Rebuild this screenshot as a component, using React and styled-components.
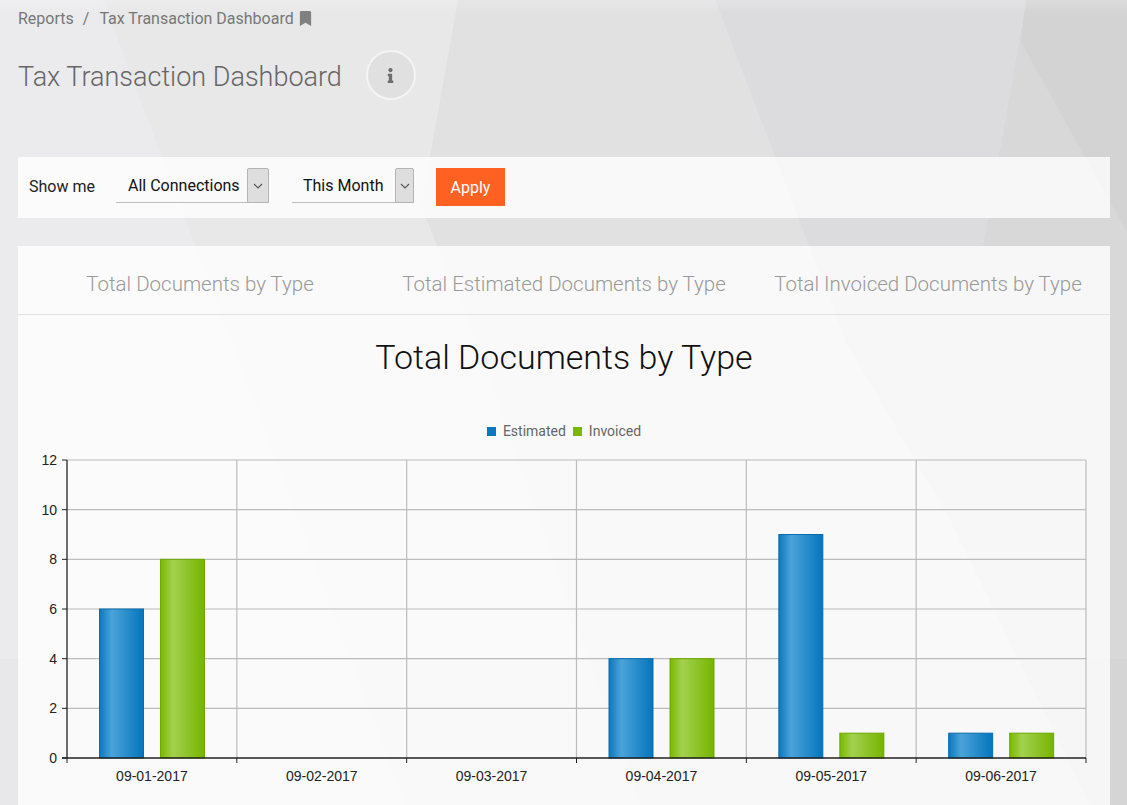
import React from 'react';
import styled, { createGlobalStyle } from 'styled-components';
import { FaBookmark, FaInfo } from 'react-icons/fa';

// STYLES

const GlobalStyle = createGlobalStyle`
  html, body {
    margin: 0;
    height: 805px;
    overflow: hidden;
    background: #ebebed;
    font-family: Roboto, "Liberation Sans", sans-serif;
  }
`;

const Backdrop = styled.svg`
  position: absolute;
  top: 0;
  left: 0;
  width: 1127px;
  height: 805px;
`;

const Page = styled.div`
  position: relative;
  padding: 0 17px 0 18px;
`;

const Breadcrumb = styled.nav`
  display: flex;
  align-items: center;
  height: 18px;
  padding-top: 9px;
  font-size: 16px;
  color: #777;
`;

const Crumb = styled.span`
  margin-right: ${(p) => p.$gap || 0}px;
`;

const TitleRow = styled.div`
  display: flex;
  align-items: center;
  height: 50px;
  margin-top: 23px;
`;

const PageTitle = styled.h1`
  margin: 4px 23px 0 0;
  font-size: 27px;
  font-weight: 300;
  color: #666;
`;

const InfoButton = styled.button`
  display: flex;
  align-items: center;
  justify-content: center;
  box-sizing: border-box;
  width: 50px;
  height: 50px;
  margin-left: 1px;
  padding: 0;
  border: 2px solid #f4f4f4;
  border-radius: 50%;
  background: #e0e0e0;
  color: #6e6e6e;
`;

const FilterBar = styled.section`
  display: flex;
  align-items: flex-start;
  box-sizing: border-box;
  height: 61px;
  margin-top: 57px;
  padding: 11px 0 0 11px;
  background: rgba(255, 255, 255, 0.78);
`;

const FilterLabel = styled.span`
  width: 87px;
  padding-top: 9px;
  font-size: 16px;
  color: #222;
`;

const Select = styled.div`
  display: flex;
  justify-content: space-between;
  box-sizing: border-box;
  width: ${(p) => p.$width}px;
  height: 35px;
  margin-right: 23px;
  border-bottom: 1px solid #bdbdbd;
`;

const SelectValue = styled.span`
  padding: 8px 0 0 ${(p) => p.$indent}px;
  font-size: 16px;
  color: #111;
`;

const SelectArrow = styled.span`
  display: flex;
  align-items: center;
  justify-content: center;
  box-sizing: border-box;
  width: ${(p) => p.$width}px;
  height: 35px;
  border: 1px solid #b4b4b4;
  border-radius: 2px;
  background: #dedede;
  color: #555;
`;

const ApplyButton = styled.button`
  width: 69px;
  height: 38px;
  margin-left: -1px;
  border: 0;
  background: #ff6123;
  color: #fff;
  font: 16px Roboto, sans-serif;
`;

const Card = styled.section`
  height: 559px;
  margin-top: 28px;
  background: rgba(255, 255, 255, 0.78);
`;

const Tabs = styled.div`
  display: grid;
  grid-template-columns: repeat(3, 1fr);
  height: 68px;
  border-bottom: 1px solid #e2e2e2;
`;

const Tab = styled.div`
  padding-top: 26px;
  text-align: center;
  font-size: 20.5px;
  font-weight: 300;
  color: #999;
`;

const ChartTitle = styled.h2`
  margin: 22px 0 0;
  height: 40px;
  line-height: 40px;
  text-align: center;
  font-size: 34px;
  font-weight: 300;
  color: #111;
`;

const Legend = styled.div`
  display: flex;
  justify-content: center;
  align-items: center;
  gap: 7px;
  height: 16px;
  margin-top: 46px;
  font-size: 14px;
  color: #666;
`;

const LegendItem = styled.span`
  display: flex;
  align-items: center;
  gap: 7px;
`;

const Swatch = styled.i`
  width: 9px;
  height: 9px;
  background: ${(p) => p.$color};
`;

const ChartSvg = styled.svg`
  display: block;
  margin-top: 6px;
  font-family: "Liberation Sans", Arial, sans-serif;
  font-size: 14px;
`;

// DATA

const days = [
  { label: '09-01-2017', estimated: 6, invoiced: 8 },
  { label: '09-02-2017', estimated: 0, invoiced: 0 },
  { label: '09-03-2017', estimated: 0, invoiced: 0 },
  { label: '09-04-2017', estimated: 4, invoiced: 4 },
  { label: '09-05-2017', estimated: 9, invoiced: 1 },
  { label: '09-06-2017', estimated: 1, invoiced: 1 },
];

const LEFT = 49;
const RIGHT = 1068;
const TOP = 15;
const BOTTOM = 313;
const STEP = (RIGHT - LEFT) / 6;
const yFor = (v) => BOTTOM - ((BOTTOM - TOP) * v) / 12;

// COMPONENTS

const Chevron = () => (
  <svg width="10" height="6" viewBox="0 0 10 6" fill="none" stroke="currentColor" strokeWidth="1.1">
    <path d="M1 1l4 4 4-4" />
  </svg>
);

const Bar = ({ x, value, fill, stroke }) => {
  if (!value) return null;
  const y = yFor(value);
  return <rect x={x} y={y} width={44} height={BOTTOM - y} fill={`url(#${fill})`} stroke={stroke} />;
};

const Chart = () => {
  const yTicks = [0, 2, 4, 6, 8, 10, 12];
  const xTicks = [0, 1, 2, 3, 4, 5, 6].map((i) => LEFT + STEP * i);
  return (
    <ChartSvg width="1092" height="360" viewBox="0 0 1092 360">
      <defs>
        <linearGradient id="blue">
          <stop offset="0" stopColor="#0a78be" />
          <stop offset="0.28" stopColor="#4ba3d8" />
          <stop offset="1" stopColor="#0475bd" />
        </linearGradient>
        <linearGradient id="green">
          <stop offset="0" stopColor="#7ab800" />
          <stop offset="0.28" stopColor="#a3d14f" />
          <stop offset="1" stopColor="#76b400" />
        </linearGradient>
      </defs>
      {yTicks.filter((v) => v).map((v) => (
        <line key={v} x1={LEFT} x2={RIGHT} y1={yFor(v)} y2={yFor(v)} stroke="#bcbcbc" strokeWidth="1.2" />
      ))}
      {xTicks.slice(1).map((x) => (
        <line key={x} x1={x} x2={x} y1={TOP} y2={BOTTOM} stroke="#bcbcbc" strokeWidth="1.2" />
      ))}
      {days.map((d, i) => (
        <g key={d.label}>
          <Bar x={LEFT + STEP * i + 32.5} value={d.estimated} fill="blue" stroke="#0a6cab" />
          <Bar x={LEFT + STEP * i + 93.5} value={d.invoiced} fill="green" stroke="#6ea800" />
          <text x={LEFT + STEP * (i + 0.5)} y={336} textAnchor="middle" fill="#222">{d.label}</text>
        </g>
      ))}
      <line x1={LEFT} x2={LEFT} y1={TOP} y2={BOTTOM} stroke="#222" strokeWidth="1.3" />
      <line x1={LEFT - 5} x2={RIGHT} y1={BOTTOM} y2={BOTTOM} stroke="#222" strokeWidth="1.3" />
      {yTicks.map((v) => (
        <g key={v}>
          <line x1={LEFT - 5} x2={LEFT} y1={yFor(v)} y2={yFor(v)} stroke="#222" />
          <text x={LEFT - 10} y={yFor(v) + 5} textAnchor="end" fill="#222">{v}</text>
        </g>
      ))}
      {xTicks.map((x) => (
        <line key={x} x1={x} x2={x} y1={BOTTOM} y2={BOTTOM + 5} stroke="#222" />
      ))}
    </ChartSvg>
  );
};

export default function App() {
  return (
    <>
      <GlobalStyle />
      <Backdrop viewBox="0 0 1127 805">
        <defs>
          <linearGradient id="topfade" x2="0" y2="1">
            <stop offset="0" stopColor="#fff" stopOpacity="0.2" />
            <stop offset="1" stopColor="#fff" stopOpacity="0" />
          </linearGradient>
        </defs>
        <polygon points="103,0 458,0 421,206 476,341 640,805 405,805" fill="#e8e8e8" />
        <polygon points="458,0 715,0 845,341 950,520 1090,805 640,805 476,341 421,206" fill="#e1e1e1" />
        <polygon points="715,0 1026,0 966,341 914,441 950,520 845,341" fill="#dcdcde" />
        <polygon points="1026,0 1127,0 1127,805 1090,805 950,520 914,441 966,341" fill="#d8d8d8" />
        <polygon points="1026,0 1127,0 1127,232 1021,42" fill="#d3d3d3" />
        <rect x="0" y="0" width="1127" height="14" fill="url(#topfade)" />
        <rect x="0" y="659" width="1127" height="146" fill="#000" fillOpacity="0.012" />
      </Backdrop>
      <Page>
        <Breadcrumb>
          <Crumb $gap={9}>Reports</Crumb>
          <Crumb $gap={10}>/</Crumb>
          <Crumb $gap={4}>Tax Transaction Dashboard</Crumb>
          <FaBookmark size={15} color="#808080" />
        </Breadcrumb>
        <TitleRow>
          <PageTitle>Tax Transaction Dashboard</PageTitle>
          <InfoButton aria-label="info"><FaInfo size={15} /></InfoButton>
        </TitleRow>
        <FilterBar>
          <FilterLabel>Show me</FilterLabel>
          <Select $width={153}>
            <SelectValue $indent={12}>All Connections</SelectValue>
            <SelectArrow $width={22}><Chevron /></SelectArrow>
          </Select>
          <Select $width={122}>
            <SelectValue $indent={11}>This Month</SelectValue>
            <SelectArrow $width={19}><Chevron /></SelectArrow>
          </Select>
          <ApplyButton>Apply</ApplyButton>
        </FilterBar>
        <Card>
          <Tabs>
            <Tab>Total Documents by Type</Tab>
            <Tab>Total Estimated Documents by Type</Tab>
            <Tab>Total Invoiced Documents by Type</Tab>
          </Tabs>
          <ChartTitle>Total Documents by Type</ChartTitle>
          <Legend>
            <LegendItem><Swatch $color="#0a78be" />Estimated</LegendItem>
            <LegendItem><Swatch $color="#7ab800" />Invoiced</LegendItem>
          </Legend>
          <Chart />
        </Card>
      </Page>
    </>
  );
}
